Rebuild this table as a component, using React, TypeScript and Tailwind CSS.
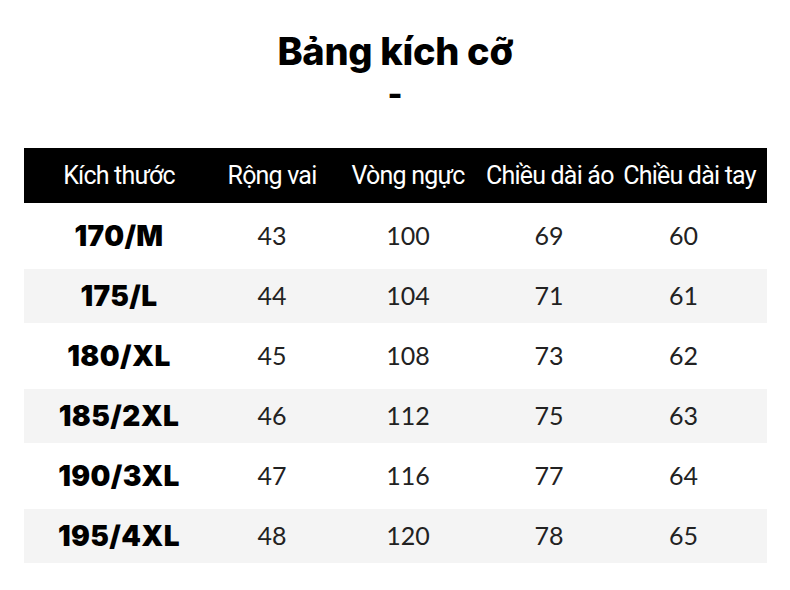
const headers = ["Kích thước", "Rộng vai", "Vòng ngực", "Chiều dài áo", "Chiều dài tay"];

const rows = [
  ["170/M", "43", "100", "69", "60"],
  ["175/L", "44", "104", "71", "61"],
  ["180/XL", "45", "108", "73", "62"],
  ["185/2XL", "46", "112", "75", "63"],
  ["190/3XL", "47", "116", "77", "64"],
  ["195/4XL", "48", "120", "78", "65"],
];

// column widths taken from the picture
const cols = "grid grid-cols-[190px_116px_156px_126px_155px]";

export default function App() {
  return (
    <div className="w-[790px] h-[590px] bg-white overflow-hidden">
      <div className="flex flex-col items-center pt-[28px]">
        <h1 className="text-[38px] font-extrabold leading-[46px] tracking-[-0.3px] text-black font-['Inter',sans-serif]">
          Bảng kích cỡ
        </h1>
        <div className="mt-[6px] text-[32px] font-extrabold leading-[28px] text-black font-['Inter',sans-serif]">-</div>
      </div>

      <div className="ml-[24px] mt-[40px] w-[743px]">
        <div className={`${cols} h-[55px] items-center bg-black text-white text-[25px] tracking-[-0.8px] font-['Liberation_Sans_Narrow','Roboto',sans-serif]`}>
          {headers.map((h) => (
            <div key={h} className="text-center whitespace-nowrap">
              {h}
            </div>
          ))}
        </div>

        {rows.map((r, i) => (
          <div
            key={r[0]}
            className={`${cols} items-center ${i % 2 === 1 ? "h-[54px] bg-[#f4f4f4]" : "h-[66px] bg-white"}`}
          >
            <div className="text-center text-[28px] font-black tracking-[0.4px] text-black font-['Inter',sans-serif]">
              {r[0]}
            </div>
            {r.slice(1).map((v, j) => (
              <div
                key={j}
                className={`text-center text-[25px] text-[#222] font-['Lato',sans-serif] ${j === 3 ? "pr-[12px]" : ""}`}
              >
                {v}
              </div>
            ))}
          </div>
        ))}
      </div>
    </div>
  );
}
